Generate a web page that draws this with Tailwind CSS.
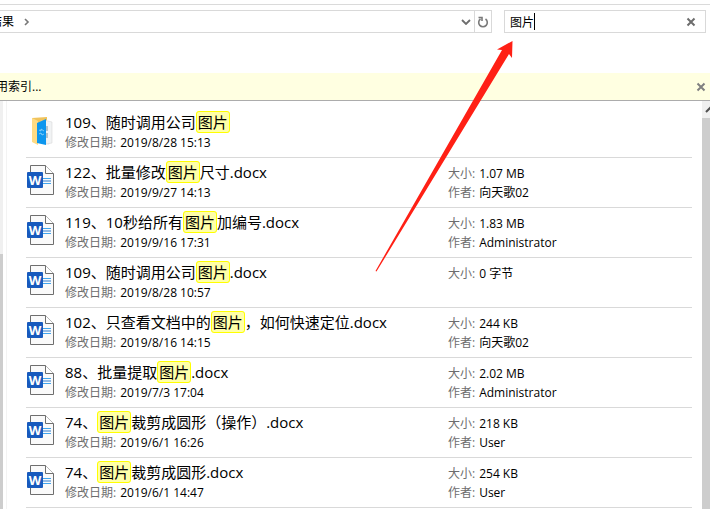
<!DOCTYPE html>
<html lang="zh-CN">
<head>
  <meta charset="UTF-8" />
  <meta name="viewport" content="width=device-width, initial-scale=1" />
  <title>搜索结果</title>
  <script src="https://cdn.jsdelivr.net/npm/@tailwindcss/browser@4"></script>
</head>
<body class="relative flex flex-col h-screen overflow-hidden bg-white text-black text-[12px] leading-[19px] font-['Open_Sans','Noto_Sans_CJK_SC',sans-serif]">

  <!-- Icons -->
  <svg class="hidden">
    <symbol id="icon-word" viewBox="0 0 28 30">
      <path d="M4.5.5h15l8 8v21h-23z" fill="#fafafa" stroke="#6e6e6e" />
      <path d="M19.5.5v8h8" fill="#fff" stroke="#6e6e6e" />
      <path d="M17 13.500h8M17 18.500h8" stroke="#41a5ee" />
      <path d="M17 16h8" stroke="#2b7cd3" />
      <rect x="1" y="7" width="16" height="16" rx="1" fill="#185abd" />
      <text x="9" y="20" text-anchor="middle" font-size="13" font-weight="700" fill="#fff">W</text>
    </symbol>
    <symbol id="icon-folder" viewBox="0 0 28 30">
      <path d="M6 2 21 1v22L9 27l-3-2z" fill="#f0c35c" />
      <path d="m15 5 8 1v22l-8-1z" fill="#fafafa" stroke="#d6d6d6" stroke-width=".6" />
      <path d="m18 4 8 2v21l-6 1z" fill="#f1f3f4" stroke="#d9d9d9" stroke-width=".6" />
      <path d="M21 10v5M21 17v5" stroke="#b5c3cb" stroke-width="2" />
      <path d="m6 2 6 3v24l-6-3z" fill="#ffdb83" />
      <path d="m11 7 9-4v26l-9-2z" fill="#0c96ee" />
      <path d="m13 14 2 1v-2l3 2M13 18l2-1 1 2 2-1" fill="none" stroke="#9bd7fb" stroke-width=".8" />
    </symbol>
    <symbol id="icon-close" viewBox="0 0 10 10">
      <path d="m1.500 1.500 7 7M8.500 1.500l-7 7" fill="none" stroke="currentColor" stroke-width="2" />
    </symbol>
  </svg>

  <!-- Address bar + search -->
  <header class="shrink-0 h-[73px] pt-1">
    <div class="flex gap-3 border-t border-[#dadada] pt-[5px] pr-1">
      <nav class="flex flex-1 items-stretch h-[23px] border-y border-r border-[#d9d9d9]">
        <div class="flex flex-1 items-center gap-[10px] overflow-hidden">
          <a href="#" class="-ml-[10px]">结果</a>
          <svg class="w-[6px] h-2 text-[#777]" viewBox="0 0 6 8"><path d="m1 1 3 3-3 3" fill="none" stroke="currentColor" stroke-width="1.6" /></svg>
        </div>
        <button type="button" aria-label="历史记录" class="flex items-center justify-center w-4 text-[#6d6d6d]">
          <svg class="w-[10px] h-[6px]" viewBox="0 0 10 6"><path d="m1 1 4 4 4-4" fill="none" stroke="currentColor" stroke-width="1.8" /></svg>
        </button>
        <button type="button" aria-label="刷新" class="flex items-center justify-center w-[17px] border-l border-[#d9d9d9] text-[#7a7a7a]">
          <svg class="w-3 h-3" viewBox="0 0 12 12"><path d="M8.500 3A4.300 4.300 0 1 1 3.500 3M1.500 1.500h3.500v3.500" fill="none" stroke="currentColor" stroke-width="1.600" /></svg>
        </button>
      </nav>
      <form class="relative flex items-center w-[202px] h-[23px] border border-[#d9d9d9] pl-[5px] pr-[9px]">
        <input type="text" value="图片" aria-label="搜索" class="flex-1 min-w-0 h-full outline-none" />
        <span class="absolute left-[29px] top-[2px] w-px h-[17px] bg-black"></span>
        <button type="button" aria-label="清除" class="text-[#6d6d6d]"><svg class="w-[10px] h-[10px]"><use href="#icon-close" /></svg></button>
      </form>
    </div>
  </header>

  <!-- Info bar -->
  <div class="shrink-0 flex items-center justify-between h-7 pr-1 bg-[#ffffe1] border-b border-[#acacac] overflow-hidden">
    <p class="-ml-1">用索引...</p>
    <button type="button" aria-label="关闭" class="text-[#808080]"><svg class="w-[10px] h-[10px]"><use href="#icon-close" /></svg></button>
  </div>

  <div class="flex flex-1 min-h-0">
    <!-- Navigation pane scrollbar -->
    <div class="w-[3px] pt-[153px] bg-[#f0f0f0]"><div class="h-full bg-[#cdcdcd]"></div></div>
    <div class="w-1 border-r border-[#f3f3f3]"></div>

    <!-- Results -->
    <main class="flex-1 min-w-0 pt-[7px] pl-[19px] pr-[10px] overflow-hidden">
      <ul>
        <li class="grid grid-cols-[39px_1fr_244px] h-[50px] pt-1 border-b border-[#d9d9d9]">
          <svg class="w-7 h-[30px] mt-1"><use href="#icon-folder" /></svg>
          <div>
            <h3 class="text-[15px] leading-[21px]">109、随时调用公司<mark class="px-px border border-[#ffff00] rounded-[3px] bg-[#ffffa8]">图片</mark></h3>
            <p class="flex gap-1"><span class="text-[#6d6d6d]">修改日期:</span> 2019/8/28 15:13</p>
          </div>
        </li>
        <li class="grid grid-cols-[39px_1fr_244px] h-[50px] pt-1 border-b border-[#d9d9d9]">
          <svg class="w-7 h-[30px] mt-[3px]"><use href="#icon-word" /></svg>
          <div>
            <h3 class="text-[15px] leading-[21px]">122、批量修改<mark class="px-px border border-[#ffff00] rounded-[3px] bg-[#ffffa8]">图片</mark>尺寸.docx</h3>
            <p class="flex gap-1"><span class="text-[#6d6d6d]">修改日期:</span> 2019/9/27 14:13</p>
          </div>
          <div class="pt-[2px]">
            <p class="flex gap-1"><span class="text-[#6d6d6d]">大小:</span> 1.07 MB</p>
            <p class="flex gap-1"><span class="text-[#6d6d6d]">作者:</span> 向天歌02</p>
          </div>
        </li>
        <li class="grid grid-cols-[39px_1fr_244px] h-[50px] pt-1 border-b border-[#d9d9d9]">
          <svg class="w-7 h-[30px] mt-[3px]"><use href="#icon-word" /></svg>
          <div>
            <h3 class="text-[15px] leading-[21px]">119、10秒给所有<mark class="px-px border border-[#ffff00] rounded-[3px] bg-[#ffffa8]">图片</mark>加编号.docx</h3>
            <p class="flex gap-1"><span class="text-[#6d6d6d]">修改日期:</span> 2019/9/16 17:31</p>
          </div>
          <div class="pt-[2px]">
            <p class="flex gap-1"><span class="text-[#6d6d6d]">大小:</span> 1.83 MB</p>
            <p class="flex gap-1"><span class="text-[#6d6d6d]">作者:</span> Administrator</p>
          </div>
        </li>
        <li class="grid grid-cols-[39px_1fr_244px] h-[50px] pt-1 border-b border-[#d9d9d9]">
          <svg class="w-7 h-[30px] mt-[3px]"><use href="#icon-word" /></svg>
          <div>
            <h3 class="text-[15px] leading-[21px]">109、随时调用公司<mark class="px-px border border-[#ffff00] rounded-[3px] bg-[#ffffa8]">图片</mark>.docx</h3>
            <p class="flex gap-1"><span class="text-[#6d6d6d]">修改日期:</span> 2019/8/28 10:57</p>
          </div>
          <div class="pt-[2px]">
            <p class="flex gap-1"><span class="text-[#6d6d6d]">大小:</span> 0 字节</p>
          </div>
        </li>
        <li class="grid grid-cols-[39px_1fr_244px] h-[50px] pt-1 border-b border-[#d9d9d9]">
          <svg class="w-7 h-[30px] mt-[3px]"><use href="#icon-word" /></svg>
          <div>
            <h3 class="text-[15px] leading-[21px]">102、只查看文档中的<mark class="px-px border border-[#ffff00] rounded-[3px] bg-[#ffffa8]">图片</mark>，如何快速定位.docx</h3>
            <p class="flex gap-1"><span class="text-[#6d6d6d]">修改日期:</span> 2019/8/16 14:15</p>
          </div>
          <div class="pt-[2px]">
            <p class="flex gap-1"><span class="text-[#6d6d6d]">大小:</span> 244 KB</p>
            <p class="flex gap-1"><span class="text-[#6d6d6d]">作者:</span> 向天歌02</p>
          </div>
        </li>
        <li class="grid grid-cols-[39px_1fr_244px] h-[50px] pt-1 border-b border-[#d9d9d9]">
          <svg class="w-7 h-[30px] mt-[3px]"><use href="#icon-word" /></svg>
          <div>
            <h3 class="text-[15px] leading-[21px]">88、批量提取<mark class="px-px border border-[#ffff00] rounded-[3px] bg-[#ffffa8]">图片</mark>.docx</h3>
            <p class="flex gap-1"><span class="text-[#6d6d6d]">修改日期:</span> 2019/7/3 17:04</p>
          </div>
          <div class="pt-[2px]">
            <p class="flex gap-1"><span class="text-[#6d6d6d]">大小:</span> 2.02 MB</p>
            <p class="flex gap-1"><span class="text-[#6d6d6d]">作者:</span> Administrator</p>
          </div>
        </li>
        <li class="grid grid-cols-[39px_1fr_244px] h-[50px] pt-1 border-b border-[#d9d9d9]">
          <svg class="w-7 h-[30px] mt-[3px]"><use href="#icon-word" /></svg>
          <div>
            <h3 class="text-[15px] leading-[21px]">74、<mark class="px-px border border-[#ffff00] rounded-[3px] bg-[#ffffa8]">图片</mark>裁剪成圆形（操作）.docx</h3>
            <p class="flex gap-1"><span class="text-[#6d6d6d]">修改日期:</span> 2019/6/1 16:26</p>
          </div>
          <div class="pt-[2px]">
            <p class="flex gap-1"><span class="text-[#6d6d6d]">大小:</span> 218 KB</p>
            <p class="flex gap-1"><span class="text-[#6d6d6d]">作者:</span> User</p>
          </div>
        </li>
        <li class="grid grid-cols-[39px_1fr_244px] h-[50px] pt-1 border-b border-[#d9d9d9]">
          <svg class="w-7 h-[30px] mt-[3px]"><use href="#icon-word" /></svg>
          <div>
            <h3 class="text-[15px] leading-[21px]">74、<mark class="px-px border border-[#ffff00] rounded-[3px] bg-[#ffffa8]">图片</mark>裁剪成圆形.docx</h3>
            <p class="flex gap-1"><span class="text-[#6d6d6d]">修改日期:</span> 2019/6/1 14:47</p>
          </div>
          <div class="pt-[2px]">
            <p class="flex gap-1"><span class="text-[#6d6d6d]">大小:</span> 254 KB</p>
            <p class="flex gap-1"><span class="text-[#6d6d6d]">作者:</span> User</p>
          </div>
        </li>
      </ul>
    </main>

    <!-- Results scrollbar -->
    <div class="flex flex-col w-2 bg-[#f0f0f0] overflow-hidden">
      <svg class="shrink-0 w-4 h-[17px] text-[#505050]" viewBox="0 0 16 17"><path d="m4 11 4-4 4 4" fill="none" stroke="currentColor" stroke-width="2" /></svg>
      <div class="flex-1 bg-[#cdcdcd]"></div>
    </div>
  </div>

  <!-- Arrow pointing at the search box -->
  <svg class="absolute right-[197px] top-10 w-[138px] h-[233px] pointer-events-none" viewBox="0 0 138 233">
    <path d="M137.500 1 122 9.500l5 .5L.500 231l1 .5L134 14l3 4z" fill="#ff2015" />
  </svg>

</body>
</html>
